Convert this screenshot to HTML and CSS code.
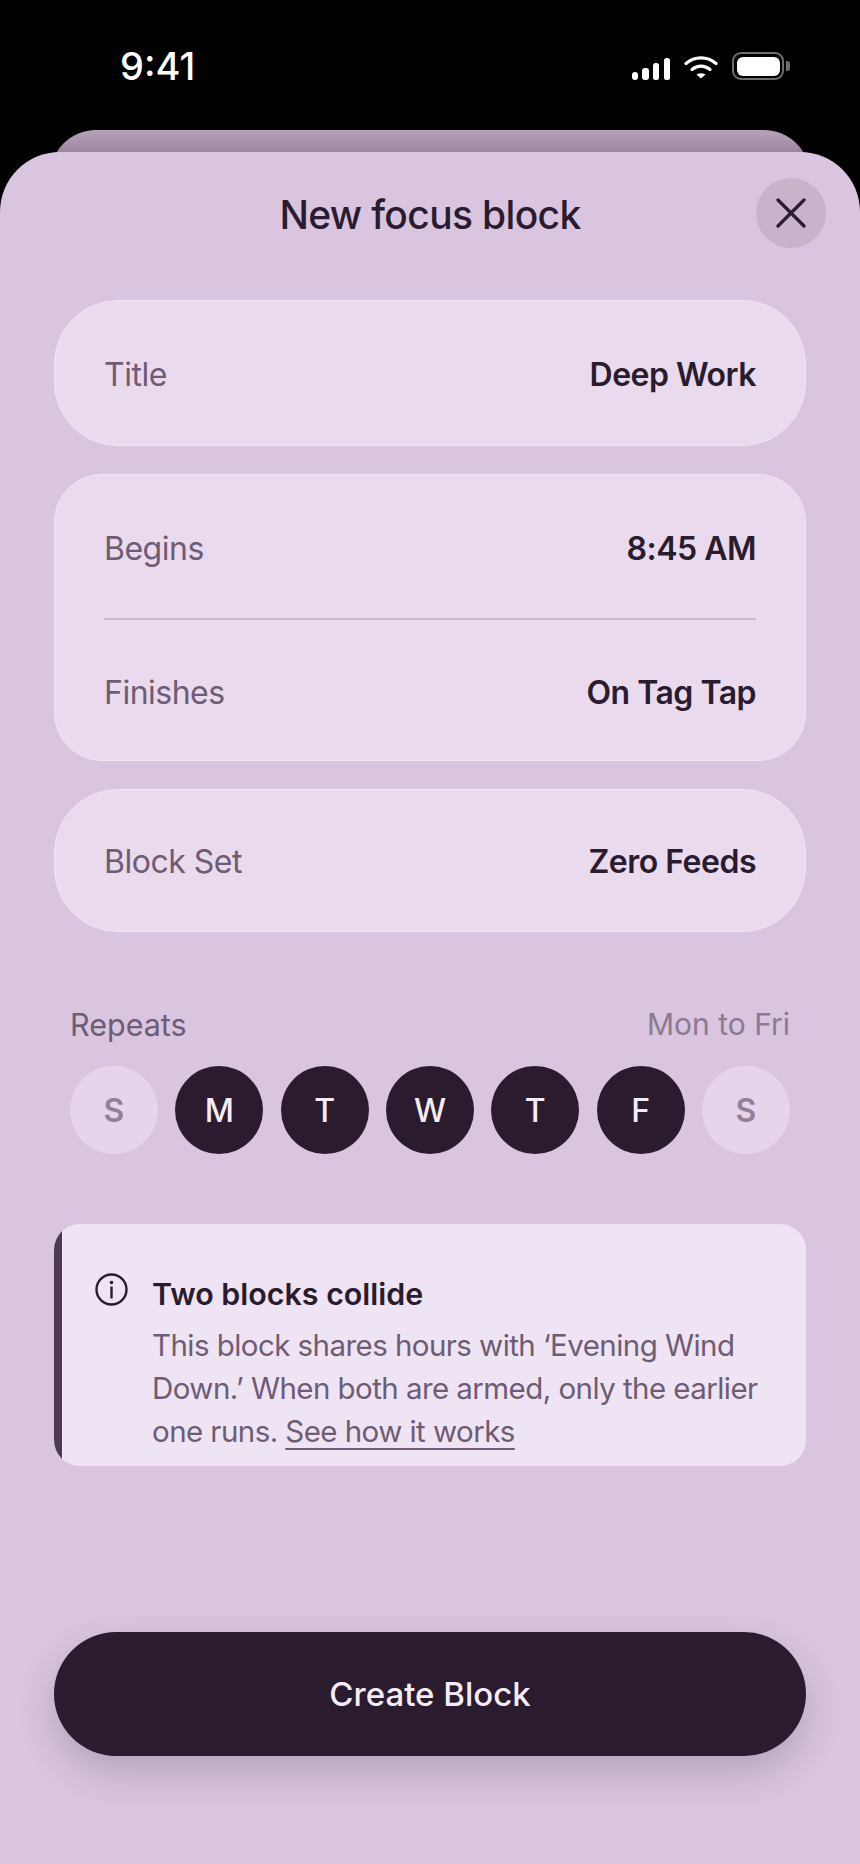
FILE: index.html
```html
<!DOCTYPE html>
<html lang="en">
<head>
<meta charset="utf-8">
<title>New focus block</title>
<link rel="stylesheet" href="styles.css">
</head>
<body>
<div class="screen">
  <header class="status">
    <span class="time">9:41</span>
    <div class="status-icons">
      <svg class="signal" width="38" height="22" viewBox="0 0 38 22"><rect x="0" y="14" width="6" height="8" rx="3"/><rect x="10" y="10" width="7" height="12" rx="3"/><rect x="21" y="5" width="6" height="17" rx="2.500"/><rect x="32" y="0" width="6" height="22" rx="2.500"/></svg>
      <svg class="wifi" width="34" height="23" viewBox="0 0 34 23"><path d="M2 7.500C10.500 0 23.500 0 32 7.500" fill="none" stroke="#fff" stroke-width="3.200" stroke-linecap="round"/><path d="M8 13.500C13.500 9 20.500 9 26 13.500" fill="none" stroke="#fff" stroke-width="3.200" stroke-linecap="round"/><path d="M12.500 18.500 Q17 16 21.500 18.500 L17 22.500Z" fill="#fff"/></svg>
      <div class="battery"><div class="battery-body"><div class="battery-fill"></div></div><div class="battery-cap"></div></div>
    </div>
  </header>
  <div class="stack">
    <div class="back-card"></div>
    <main class="sheet">
      <div class="sheet-head">
        <h1 class="sheet-title">New focus block</h1>
        <button class="close" aria-label="Close"><svg width="30" height="30" viewBox="0 0 30 30"><path d="M2 2L28 28M28 2L2 28" fill="none" stroke="#2a1c2e" stroke-width="3.200" stroke-linecap="round"/></svg></button>
      </div>
      <section class="card card-pill card-title"><span class="label">Title</span><span class="value">Deep Work</span></section>
      <section class="card card-group">
        <div class="row row-top"><span class="label">Begins</span><span class="value">8:45 AM</span></div>
        <div class="divider"></div>
        <div class="row row-bottom"><span class="label">Finishes</span><span class="value">On Tag Tap</span></div>
      </section>
      <section class="card card-pill card-set"><span class="label">Block Set</span><span class="value">Zero Feeds</span></section>
      <section class="repeats">
        <div class="repeats-head"><span class="repeats-label">Repeats</span><span class="repeats-summary">Mon to Fri</span></div>
        <div class="days">
          <span class="day">S</span><span class="day on">M</span><span class="day on">T</span><span class="day on">W</span><span class="day on">T</span><span class="day on">F</span><span class="day">S</span>
        </div>
      </section>
      <section class="notice">
        <div class="notice-bar"></div>
        <div class="notice-main">
          <svg class="notice-icon" width="33" height="33" viewBox="0 0 33 33"><circle cx="16.500" cy="16.500" r="15" fill="none" stroke="#2a1c2e" stroke-width="2.400"/><circle cx="16.500" cy="9.500" r="1.800" fill="#2a1c2e"/><rect x="15.300" y="13.500" width="2.400" height="12" fill="#2a1c2e"/></svg>
          <div class="notice-text">
            <h2 class="notice-title">Two blocks collide</h2>
            <p class="notice-body">This block shares hours with ‘Evening Wind Down.’ When both are armed, only the earlier one runs. <a class="notice-link">See how it works</a></p>
          </div>
        </div>
      </section>
      <button class="create">Create Block</button>
    </main>
  </div>
</div>
</body>
</html>
```
FILE: styles.css
```css
* { box-sizing: border-box; }
html, body { margin: 0; padding: 0; background: #000; }
body { font-family: Inter, "Liberation Sans", sans-serif; }
.screen { width: 860px; height: 1864px; display: flex; flex-direction: column; overflow: hidden; background: #000; }
.status { height: 130px; flex: none; display: flex; justify-content: space-between; align-items: flex-start; padding: 46px 70px 0 120px; }
.time { color: #fff; font-size: 38px; font-weight: 500; line-height: 40px; }
.status-icons { display: flex; align-items: flex-end; gap: 14px; margin-top: 6px; }
.signal { fill: #fff; display: block; }
.wifi { display: block; margin-bottom: 1px; }
.battery { display: flex; align-items: center; gap: 2px; }
.battery-body { width: 52px; height: 28px; border: 2px solid #6e6e6e; border-radius: 9px; padding: 2.500px; }
.battery-fill { width: 100%; height: 100%; background: #fff; border-radius: 6px; }
.battery-cap { width: 4px; height: 10px; background: #6e6e6e; border-radius: 0 3px 3px 0; }
.stack { position: relative; flex: 1; display: flex; flex-direction: column; padding-top: 22px; }
.back-card { position: absolute; top: 0; left: 50px; right: 50px; height: 80px; border-radius: 46px 46px 0 0; background: linear-gradient(#b7a2ba, #9b879d 28%); }
.sheet { position: relative; flex: 1; background: #d9c5e0; border-radius: 60px 60px 0 0; padding: 26px 54px 0; display: flex; flex-direction: column; }
.sheet-head { position: relative; height: 70px; display: flex; align-items: center; justify-content: center; margin-bottom: 52px; }
.sheet-title { margin: 0; font-size: 39px; font-weight: 500; letter-spacing: -0.650px; color: #2a1c2e; position: relative; top: 1px; }
.close { position: absolute; right: -20px; top: 0; width: 70px; height: 70px; border: 0; border-radius: 50%; background: #c7b3ca; display: flex; align-items: center; justify-content: center; padding: 0; }
.card { background: #e9daed; border: 1.500px solid #f1e6f4; color: #2a1c2e; }
.card-pill { display: flex; justify-content: space-between; align-items: center; padding: 2px 49px 0; border-radius: 64px; }
.card-title { height: 146px; margin-bottom: 28px; }
.card-set { height: 143px; margin-top: 28px; }
.card-group { height: 287px; border-radius: 48px; padding: 0 49px; display: flex; flex-direction: column; }
.row { display: flex; justify-content: space-between; align-items: center; padding-top: 4px; }
.row-top { height: 143px; flex: none; }
.row-bottom { flex: 1; }
.divider { height: 2px; background: #c9b6cd; flex: none; }
.label { font-size: 32px; color: #6e5c74; font-weight: 400; letter-spacing: -0.500px; }
.value { font-size: 32px; font-weight: 600; color: #2a1c2e; letter-spacing: -0.500px; }
.repeats { margin-top: 72px; padding: 0 16px; }
.repeats-head { display: flex; justify-content: space-between; align-items: center; height: 40px; margin-bottom: 22px; }
.repeats-label { font-size: 30.500px; color: #6e5c74; }
.repeats-summary { font-size: 30px; color: #8d7a92; }
.days { display: flex; justify-content: space-between; }
.day { width: 88px; height: 88px; border-radius: 50%; background: #e5d4ea; color: #947f99; font-size: 32px; font-weight: 600; display: flex; align-items: center; justify-content: center; }
.day.on { background: #2a1c2e; color: #f6ecf8; font-weight: 500; }
.notice { margin-top: 70px; height: 242px; background: #eee4f3; border-radius: 26px; overflow: hidden; display: flex; }
.notice-bar { width: 8px; flex: none; background: #4d3a52; }
.notice-main { flex: 1; display: flex; gap: 24px; padding: 50px 30px 0 33px; }
.notice-icon { flex: none; display: block; margin-top: -1px; }
.notice-text { flex: 1; }
.notice-title { margin: 0 0 10px; font-size: 30.400px; line-height: 40px; font-weight: 600; color: #2a1c2e; }
.notice-body { margin: 0; font-size: 29.500px; line-height: 43px; color: #6e5c74; letter-spacing: -0.560px; }
.notice-link { text-decoration: underline; text-underline-offset: 6px; text-decoration-thickness: 2px; }
.create { margin-top: 166px; height: 124px; border: 0; border-radius: 62px; background: #2a1c2e; color: #f6ecf8; font-family: inherit; font-size: 33px; font-weight: 500; box-shadow: 0 16px 36px rgba(42, 28, 46, 0.2); }
```
